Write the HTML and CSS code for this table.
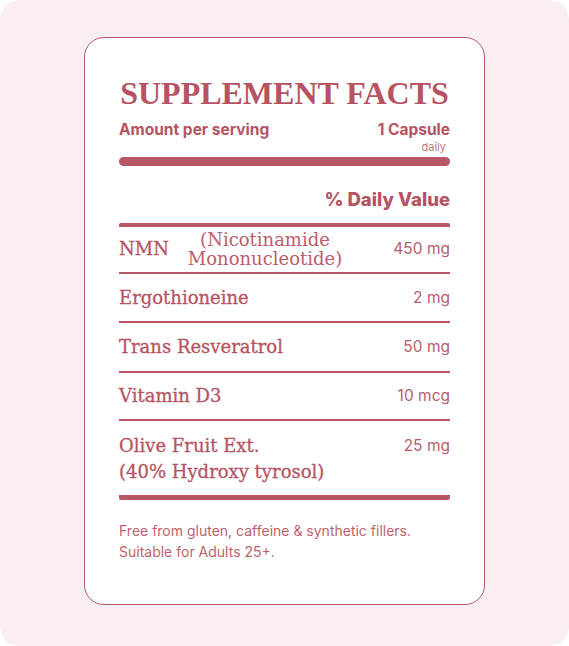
FILE: index.html
```html
<!DOCTYPE html>
<html lang="en">
<head>
    <meta charset="utf-8">
    <meta name="viewport" content="width=device-width, initial-scale=1.0">
    <title>Supplement Facts</title>
    <link rel="stylesheet" href="styles.css">
</head>
<body>
    <div class="page">
        <div class="label">
            <h1 class="title">SUPPLEMENT FACTS</h1>

            <div class="serving">
                <span class="serving-label">Amount per serving</span>
                <span class="serving-size">1 Capsule</span>
            </div>
            <div class="serving-note">daily</div>
            <div class="bar"></div>

            <div class="dv-head">% Daily Value</div>

            <div class="rows">
                <div class="row row-nmn">
                    <span class="name">NMN</span>
                    <span class="desc">(Nicotinamide<br>Mononucleotide)</span>
                    <span class="amount">450 mg</span>
                </div>
                <div class="row">
                    <span class="name">Ergothioneine</span>
                    <span class="amount">2 mg</span>
                </div>
                <div class="row row-tall">
                    <span class="name">Trans Resveratrol</span>
                    <span class="amount">50 mg</span>
                </div>
                <div class="row row-short">
                    <span class="name">Vitamin D3</span>
                    <span class="amount">10 mcg</span>
                </div>
                <div class="row row-last">
                    <span class="name">Olive Fruit Ext.<br>(40% Hydroxy tyrosol)</span>
                    <span class="amount">25 mg</span>
                </div>
            </div>

            <p class="note">
                Free from gluten, caffeine &amp; synthetic fillers.<br>
                Suitable for Adults 25+.
            </p>
        </div>
    </div>
</body>
</html>
```

FILE: styles.css
```css
/* ページ全体 */
body {
    margin: 0;
    background-color: #fff;
}

.page {
    height: 646px;
    box-sizing: border-box;
    padding: 37px 84px 0;
    background-color: #f9eef0;
    border-radius: 20px;
}

/* ラベル本体 */
.label {
    height: 568px;
    box-sizing: border-box;
    padding: 30px 34px 0;
    background-color: #fff;
    border: 1px solid #b85666;
    border-radius: 20px;
    color: #b65362;
}

.title {
    margin: 0;
    font-family: "Liberation Serif", serif;
    font-size: 32px;
    font-weight: bold;
    text-align: center;
    line-height: 50px;
}

/* 1回あたりの量 */
.serving {
    display: flex;
    justify-content: space-between;
    margin-top: 2px;
    font-family: Inter, sans-serif;
    font-size: 15.5px;
    font-weight: bold;
    line-height: 20px;
}

.serving-note {
    text-align: right;
    padding-right: 4px;
    font-family: Inter, sans-serif;
    font-size: 11px;
    line-height: 14px;
    color: #c27280;
}

.bar {
    height: 9px;
    margin-top: 3px;
    border-radius: 5px;
    background-color: #b85666;
}

.dv-head {
    margin-top: 21px;
    text-align: right;
    font-family: Inter, sans-serif;
    font-size: 18.5px;
    font-weight: 800;
    line-height: 24px;
}

/* 成分リスト */
.rows {
    margin-top: 12px;
    border-top: 4px solid #b85666;
    border-bottom: 5px solid #b85666;
    border-radius: 2px;
}

.row {
    display: flex;
    align-items: flex-start;
    padding: 12px 0 11px;
    border-bottom: 2px solid #b85666;
    font-family: "DejaVu Serif", serif;
    font-size: 18px;
    line-height: 24px;
}

.name {
    flex: 1;
    -webkit-text-stroke: 0.3px #b65362;
}

.row-nmn {
    align-items: center;
    padding: 3px 0 4px;
}

.row-nmn .name {
    flex: none;
    width: 66px;
}

.row-tall {
    padding: 12px 0 12px;
}

.row-short {
    padding: 11px 0 11px;
}

.row-last {
    border-bottom: none;
    line-height: 26px;
    padding: 12px 0 10px;
}

.desc {
    width: 160px;
    text-align: center;
    font-size: 18px;
    line-height: 19px;
    color: #bb5d6c;
}

.amount {
    margin-left: auto;
    font-family: Inter, sans-serif;
    font-size: 15.5px;
    color: #b85c6b;
}

/* 注意書き */
.note {
    margin: 20px 0 0;
    font-family: Inter, sans-serif;
    font-size: 14px;
    line-height: 21px;
    color: #bf5f6d;
}
```
